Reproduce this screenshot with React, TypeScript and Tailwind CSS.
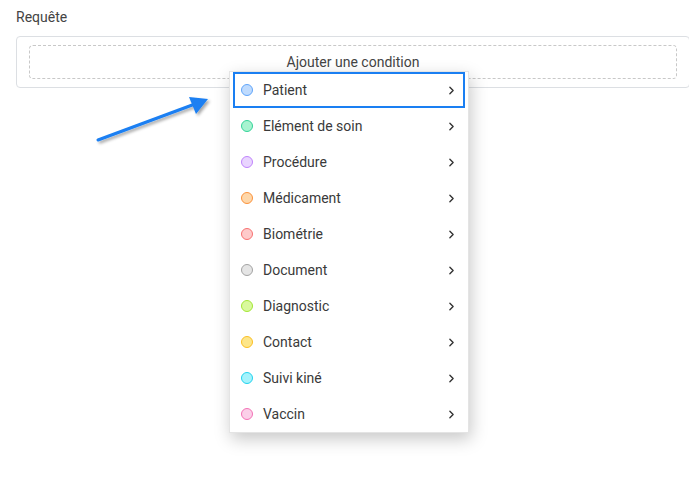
import React from 'react';
import { ChevronRight } from 'lucide-react';

const items = [
  { label: 'Patient', dot: 'bg-[#bfdbfe] border-[#60a5fa]' },
  { label: 'Elément de soin', dot: 'bg-[#a7f3d0] border-[#34d399]' },
  { label: 'Procédure', dot: 'bg-[#e9d5ff] border-[#c084fc]' },
  { label: 'Médicament', dot: 'bg-[#fed7aa] border-[#fb923c]' },
  { label: 'Biométrie', dot: 'bg-[#fecaca] border-[#f87171]' },
  { label: 'Document', dot: 'bg-[#e5e5e5] border-[#a3a3a3]' },
  { label: 'Diagnostic', dot: 'bg-[#d9f99d] border-[#a3e635]' },
  { label: 'Contact', dot: 'bg-[#fde68a] border-[#fbbf24]' },
  { label: 'Suivi kiné', dot: 'bg-[#a5f3fc] border-[#22d3ee]' },
  { label: 'Vaccin', dot: 'bg-[#fbcfe8] border-[#f472b6]' },
];

export default function App() {
  return (
    <div className="relative w-[689px] h-[482px] overflow-hidden bg-white font-['Roboto',sans-serif] text-[#444]">
      <div className="pl-4 pt-[7px]">
        <div className="text-sm leading-5">Requête</div>
        <div className="mt-[9px] w-[674px] border border-[#dcdfe3] rounded px-3 py-2">
          <div className="h-[34px] border border-dashed border-[#c8c8c8] rounded-sm flex items-center justify-center text-sm">
            Ajouter une condition
          </div>
        </div>
      </div>

      {/* annotation arrow */}
      <svg className="absolute left-[90px] top-[90px]" width="130" height="60" viewBox="0 0 130 60">
        <defs>
          <filter id="sh" x="-20%" y="-40%" width="140%" height="180%">
            <feDropShadow dx="2" dy="2" stdDeviation="1.5" floodColor="#000" floodOpacity="0.35" />
          </filter>
        </defs>
        <g filter="url(#sh)">
          <line x1="8" y1="50" x2="105" y2="14" stroke="#1a7ff2" strokeWidth="3" strokeLinecap="round" />
          <polygon points="118,9 99,7 106,24" fill="#1a7ff2" />
        </g>
      </svg>

      {/* dropdown */}
      <div className="absolute left-[229px] top-[71px] w-[240px] bg-white border border-[#e4e4e4] shadow-[2px_6px_16px_rgba(0,0,0,0.22)]">
        {items.map((it, i) => (
          <div key={it.label} className="h-9 flex items-center">
            <div
              className={
                i === 0
                  ? 'flex-1 h-full flex items-center mx-[3px] my-[4px] border-2 border-[#1a7ff2] pl-[6px] pr-[5px]'
                  : 'flex-1 h-full flex items-center pl-[11px] pr-[10px]'
              }
            >
              <span className={`w-3 h-3 rounded-full border ${it.dot}`} />
              <span className="ml-[10px] flex-1 text-sm text-[#3a3a3a]">{it.label}</span>
              <ChevronRight className="w-[13px] h-[13px] text-[#333]" strokeWidth={2.5} />
            </div>
          </div>
        ))}
      </div>
    </div>
  );
}
